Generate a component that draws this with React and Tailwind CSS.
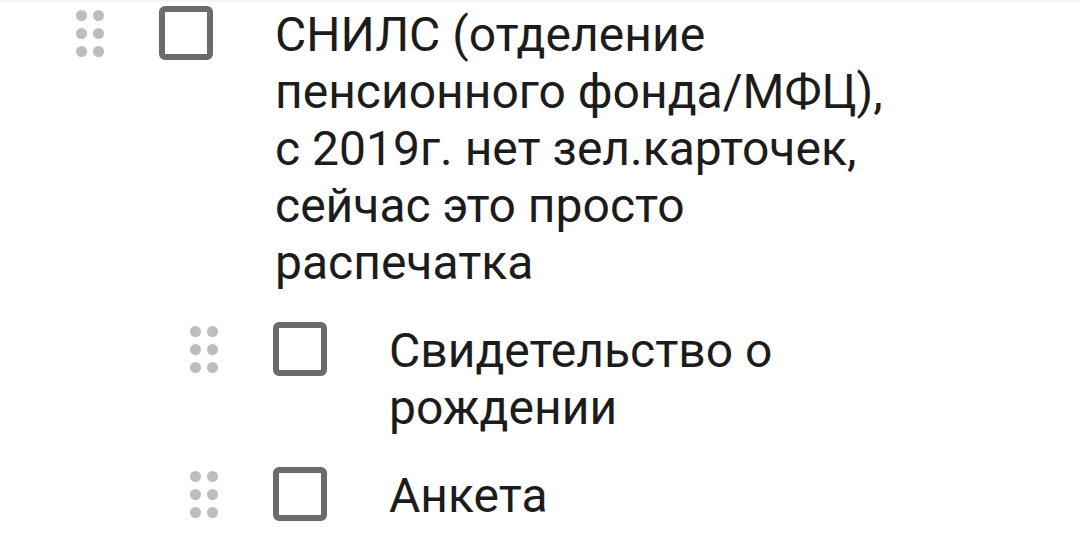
import React from "react";

const items = [
  {
    level: 0,
    text: "СНИЛС (отделение пенсионного фонда/МФЦ), с 2019г. нет зел.карточек, сейчас это просто распечатка",
  },
  { level: 1, text: "Свидетельство о рождении" },
  { level: 1, text: "Анкета" },
];

function DragHandle() {
  return (
    <div className="grid grid-cols-2 gap-x-[6px] gap-y-[7px] mt-[4px] w-[28px] shrink-0">
      {[0, 1, 2, 3, 4, 5].map((i) => (
        <span key={i} className="block w-[11px] h-[11px] rounded-full bg-[#bdbdbd]" />
      ))}
    </div>
  );
}

function ChecklistItem({ item }) {
  return (
    <div className={"flex items-start " + (item.level === 1 ? "ml-[114px]" : "")}>
      <DragHandle />
      <div className="ml-[55px] w-[54px] h-[54px] shrink-0 border-[6px] border-[#6b6b6b] rounded-[6px] bg-white" />
      <p className="ml-[62px] flex-1 text-[48px] leading-[57px] text-[#1c1c1c]">
        {item.text}
      </p>
    </div>
  );
}

export default function App() {
  return (
    <div className="w-[1080px] h-[548px] bg-white overflow-hidden font-['Roboto',sans-serif] shadow-[inset_0_3px_3px_-2px_rgba(0,0,0,0.08)]">
      <div className="pl-[76px] pr-[170px] pt-[6px] flex flex-col gap-[31px]">
        {items.map((item, i) => (
          <ChecklistItem key={i} item={item} />
        ))}
      </div>
    </div>
  );
}
